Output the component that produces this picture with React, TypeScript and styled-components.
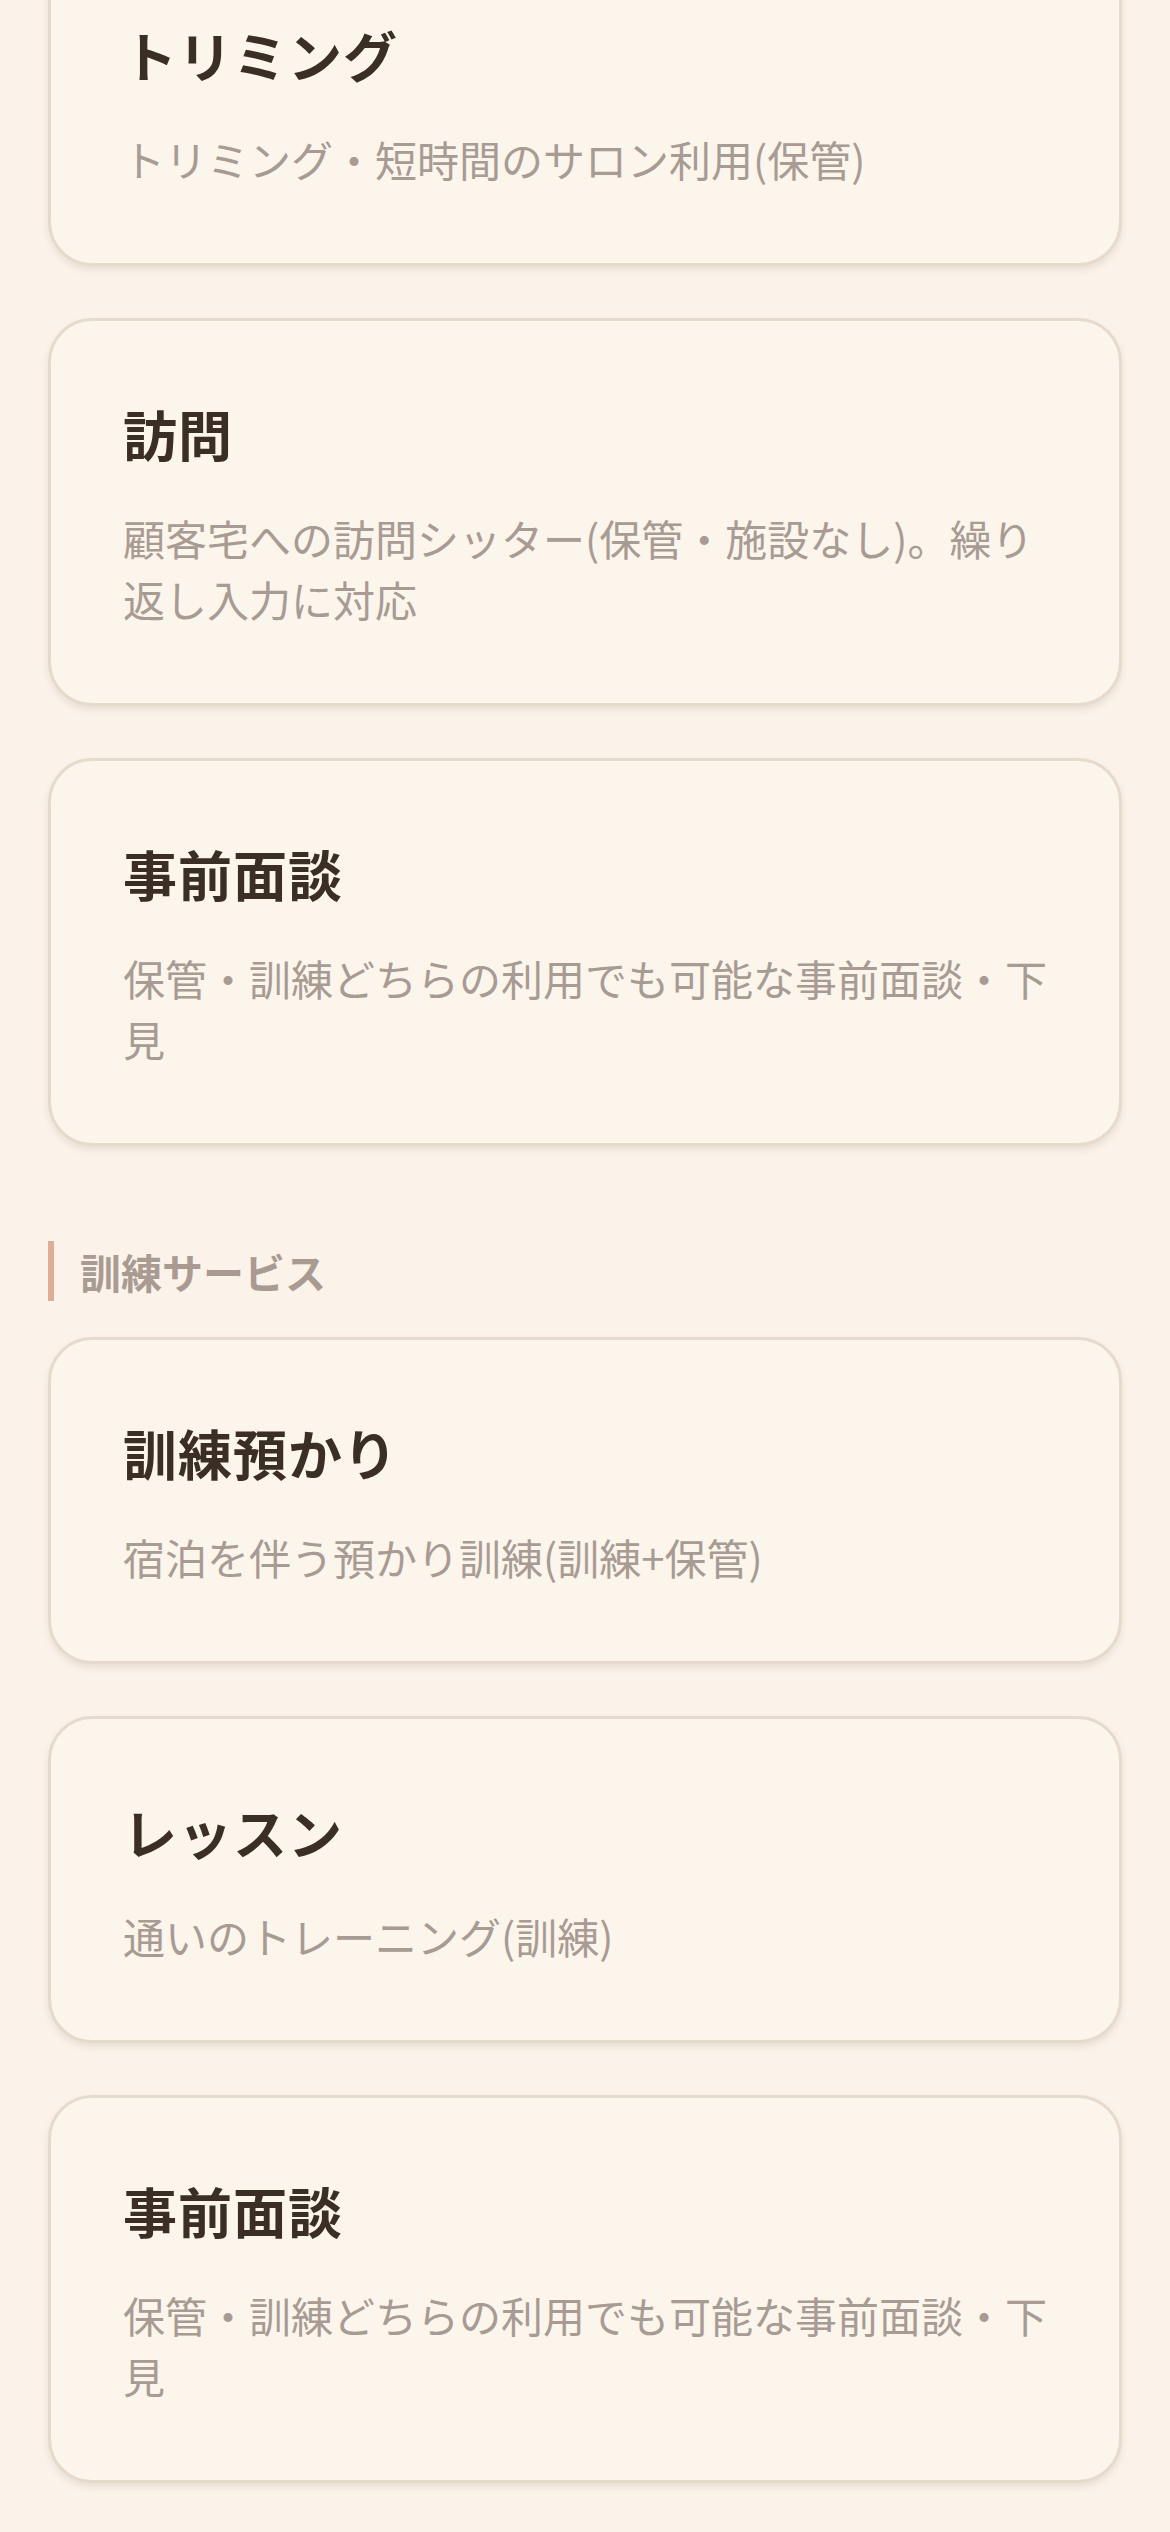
import styled, { createGlobalStyle } from 'styled-components';

type Service = {
  title: string;
  description: string;
};

const careServices: Service[] = [
  { title: 'トリミング', description: 'トリミング・短時間のサロン利用(保管)' },
  { title: '訪問', description: '顧客宅への訪問シッター(保管・施設なし)。繰り返し入力に対応' },
  { title: '事前面談', description: '保管・訓練どちらの利用でも可能な事前面談・下見' },
];

const trainingServices: Service[] = [
  { title: '訓練預かり', description: '宿泊を伴う預かり訓練(訓練+保管)' },
  { title: 'レッスン', description: '通いのトレーニング(訓練)' },
  { title: '事前面談', description: '保管・訓練どちらの利用でも可能な事前面談・下見' },
];

const GlobalStyle = createGlobalStyle`
  html, body {
    margin: 0;
    padding: 0;
    background: #fbf3ea;
  }
  body {
    font-family: 'Noto Sans CJK JP', 'Noto Sans', sans-serif;
    -webkit-font-smoothing: antialiased;
  }
`;

const ServiceCard = ({ title, description }: Service) => (
  <Card>
    <CardTitle>{title}</CardTitle>
    <CardDescription>{description}</CardDescription>
  </Card>
);

export default function App() {
  return (
    <>
      <GlobalStyle />
      <Page>
        <CardList>
          {careServices.map((s, i) => (
            <ServiceCard key={`care-${i}`} {...s} />
          ))}
        </CardList>
        <SectionLabel>訓練サービス</SectionLabel>
        <CardList>
          {trainingServices.map((s, i) => (
            <ServiceCard key={`training-${i}`} {...s} />
          ))}
        </CardList>
      </Page>
    </>
  );
}

const Page = styled.main`
  /* page is shown scrolled: first card starts above the fold */
  margin-top: -61px;
  padding: 0 48px 52px;
  display: flex;
  flex-direction: column;
`;

const CardList = styled.div`
  display: flex;
  flex-direction: column;
  gap: 52px;
`;

const Card = styled.div`
  background: #fcf5ec;
  border: 3px solid #e5dacc;
  border-radius: 44px;
  box-shadow: 0 4px 7px rgba(110, 85, 60, 0.13);
  padding: 75px 64px 74px 72px;
`;

const CardTitle = styled.h3`
  margin: 0;
  font-size: 54px;
  line-height: 76px;
  font-weight: 700;
  color: #3a2e25;
  letter-spacing: 1px;
`;

const CardDescription = styled.p`
  margin: 35px 0 0;
  font-size: 42px;
  line-height: 61px;
  font-weight: 400;
  color: #a89b93;
`;

const SectionLabel = styled.h2`
  margin: 95px 0 36px;
  padding-left: 26px;
  border-left: 6px solid #dfad95;
  font-size: 41px;
  line-height: 60px;
  font-weight: 700;
  color: #a99b92;
`;
